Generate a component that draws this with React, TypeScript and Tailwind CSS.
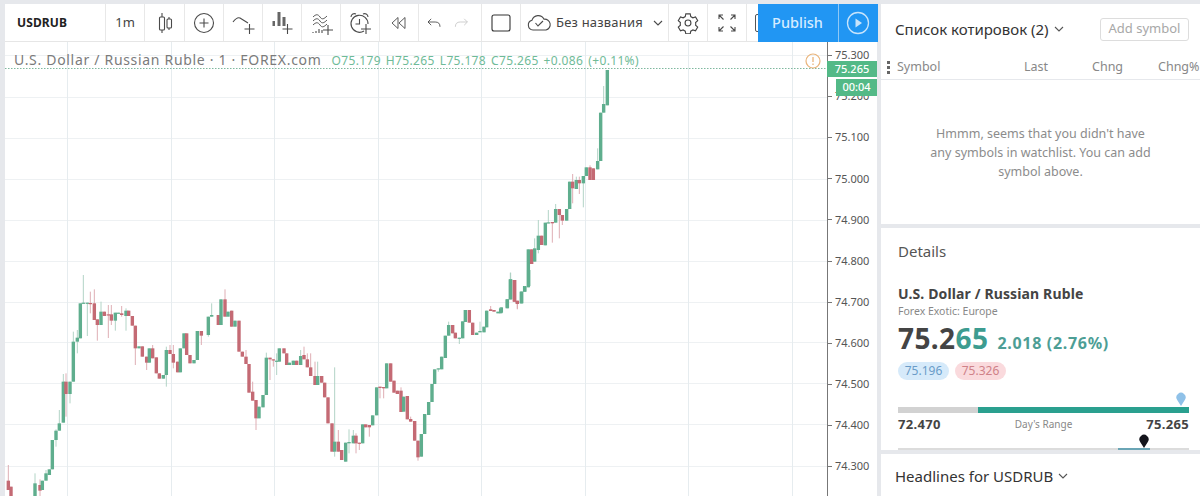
import React from "react";

type C = [number, number, number, "g" | "r", number?, number?];
// x, top, bottom, colour, wick top, wick bottom, measured in 3x picture units
const left: C[] = [
  [25,632,660,"r",585,660],[33,650,690,"r"],
  [105,640,690,"g",610],[120,645,662,"r",628,678],[127,632,660,"g"],[138,610,632,"g",600],[148,598,615,"g"],[157,510,598,"g"],[168,482,510,"g",478,530],[178,460,482,"g",420],
  [190,335,458,"g",312],[198,335,372,"r",310,440],[210,335,372,"g",335,400],[220,215,335,"g",185],[232,203,215,"g",180,250],[241,100,205,"g"],[250,98,101,"g",15,101],[262,98,101,"g",98,198],[271,99,101,"r",65,130],
  [283,100,150,"r",58,150],[292,148,165,"r",148,212],[303,125,165,"g",95,165],[313,125,138,"r"],[325,133,136,"r",105,204],[334,133,152,"r",105,165],[346,128,152,"g",128,182],[355,128,130,"g"],[365,130,135,"r",108,140],[378,122,138,"g",115,182],[386,122,138,"r"],
  [397,138,167,"r"],[406,167,235,"r",167,285],[417,229,235,"g"],[427,229,260,"r"],[440,260,278,"r",260,300],[448,235,278,"g"],[458,235,265,"r",225],[469,262,310,"r"],[478,310,326,"r"],[490,315,326,"g"],
  [499,240,315,"g",230,350],[510,240,252,"r",225],[520,252,278,"r",225,295],[533,275,307,"r"],[541,235,307,"g"],[552,190,235,"g"],[560,190,255,"r"],[570,255,280,"r"],[582,270,280,"g"],[592,183,270,"g"],[604,183,197,"r",183,225],
  [625,140,195,"g",140,200],[635,135,140,"g",100],[655,135,165,"r"],[663,88,165,"g"],[675,88,140,"r",58],[684,125,140,"g"],[695,122,170,"r"],[705,152,170,"g"],[717,152,245,"r"],[727,245,260,"r"],[738,260,282,"r",240],[747,282,368,"r"],
  [758,365,392,"r",335],[768,390,445,"r",390,480],[777,410,445,"g"],[789,375,412,"g"],[799,263,375,"g",248],[810,263,268,"r",263,330],[820,268,270,"r",268,290],[830,272,275,"g",250,315],[838,235,275,"g"],[852,235,250,"r"],[860,250,285,"r"],[868,278,285,"g"],[880,272,285,"g"],[890,272,285,"r"],
];
const mid: C[] = [
  [2,258,285,"g",240],[12,255,268,"r",230],[22,268,292,"r",250],[32,292,318,"r",250],[45,318,345,"r",275],[53,318,345,"g",275],[65,318,338,"r"],[74,338,382,"r"],[84,382,460,"r"],[96,460,545,"r"],[104,515,545,"g",292,560],[115,515,545,"r",480],[125,540,570,"r"],[137,518,575,"g"],[147,516,520,"g",478,550],[160,497,520,"g",480],[168,497,520,"r",490,550],[178,518,520,"r",518,540],
  [188,463,520,"g"],[197,463,472,"r"],[208,465,472,"r",465,500],[218,436,466,"g"],[230,352,436,"g",352],[240,350,354,"r",350,385],[251,351,355,"r",351,385],[260,280,355,"g"],[272,280,335,"r"],[282,332,368,"r"],[292,362,372,"r"],[303,362,426,"r",352],[311,380,425,"g"],[322,378,448,"r"],[332,447,455,"r",440],[344,453,512,"r"],[354,512,562,"r",512,572],[364,492,560,"g"],[374,432,492,"g"],[386,396,435,"g"],[396,342,396,"g"],[404,298,342,"g"],[415,295,298,"g",295,305],[425,260,298,"g"],[436,197,264,"g"],[446,165,197,"g",155],[458,165,190,"r"],[466,188,205,"r"],[478,203,205,"g",203,222],[488,154,205,"g"],[496,120,156,"g"],[508,120,158,"r"],[518,158,195,"r"],[530,188,195,"g"],[540,183,187,"g",155],[552,170,187,"g"],[560,122,172,"g"],[572,118,123,"r",108],[582,120,125,"r"],[594,125,130,"g"],[604,112,128,"g"],[622,88,113,"g"],[632,28,88,"g",8],[644,30,95,"r"],[652,92,100,"r",92,116],[664,65,100,"g"],[674,48,65,"g"],[686,0,48,"g"],
];
const right: C[] = [
  [2,745,760,"g"],[22,718,745,"g"],[31,658,718,"g",638],[43,660,725,"r"],[52,723,732,"r",723,748],[65,695,730,"g"],[74,680,695,"g"],[85,568,682,"g"],[95,568,612,"r"],[104,565,605,"g",535],[115,527,570,"g",480,580],[125,527,555,"r"],[136,488,556,"g",488],[145,487,490,"g",450],[157,486,490,"r",486,548],[167,447,488,"g",432],[178,447,465,"r",447,535],[187,465,482,"r",465,495],[200,447,482,"g"],[209,365,447,"g"],[218,365,385,"r",342,430],[229,360,387,"g",350],[238,360,370,"r",350,402],[250,348,370,"g",348,442],[259,322,348,"g"],[270,322,360,"r",316],[280,325,360,"r"],[293,303,328,"g",265],[302,158,303,"g"],[311,132,158,"g",78],[322,30,136,"g"],
];
type B = { x: number; y1: number; y2: number; c: "g" | "r"; w1: number; w2: number };
const toPx = (list: C[], ox: number, oy: number): B[] =>
  list.map(([x, t, b, c, w1, w2]) => ({
    x: ox + x / 3,
    y1: oy + t / 3,
    y2: oy + b / 3,
    c,
    w1: oy + (w1 ?? t) / 3,
    w2: oy + (w2 ?? b) / 3,
  }));
const candles = [...toPx(left, 0, 270), ...toPx(mid, 300, 270), ...toPx(right, 500, 60)];

const hLines = [55, 97, 138, 179, 220, 261, 302, 342, 383, 424, 466];
const vLines = [67, 171, 274, 378, 481, 585, 688, 792];
const prices = ["75.300", "75.200", "75.100", "75.000", "74.900", "74.800", "74.700", "74.600", "74.500", "74.400", "74.300"];

const s = { fill: "none", stroke: "#4a4a4a", strokeWidth: 1.1 } as const;
const Ico = ({ children, w = 26 }: { children: React.ReactNode; w?: number }) => (
  <svg width={w} height={26} viewBox={`0 0 ${w} 26`} {...s}>{children}</svg>
);

const Cell = ({ w, children }: { w: string; children: React.ReactNode }) => (
  <div className={`${w} h-full shrink-0 flex items-center justify-center border-r border-[#e8e8e8]`}>{children}</div>
);

const Pin = ({ color }: { color: string }) => (
  <svg width="10" height="14" viewBox="0 0 10 14"><path d="M5 14 L1.2 8 A4.6 4.6 0 1 1 8.8 8 Z" fill={color} /></svg>
);

export default function App() {
  return (
    <div className="w-[1200px] h-[496px] overflow-hidden bg-[#e6e8ec] flex pt-1 pl-[5px] gap-1 font-['Noto_Sans',sans-serif]">
      <div className="w-[872px] h-full bg-white flex flex-col">
        <div className="h-[38px] shrink-0 flex items-center border-b border-[#e6e6e6] relative">
          <div className="w-[101px] h-full shrink-0 flex items-center pl-[12px] border-r border-[#e8e8e8]">
            <span className="text-[12px] font-bold text-[#222] tracking-[.1px]">USDRUB</span>
          </div>
          <Cell w="w-[39px]"><span className="text-[13px] text-[#444]">1m</span></Cell>
          <Cell w="w-[40px]"><Ico>
            <path d="M10 3v20M17 7v13" /><rect x="7.500" y="7" width="5" height="13" rx="1" fill="#fff" /><rect x="15" y="9" width="4.500" height="9" rx="1" fill="#fff" />
          </Ico></Cell>
          <Cell w="w-[39px]"><Ico><circle cx="13" cy="13" r="9.500" /><path d="M13 8.500v9M8.500 13h9" /></Ico></Cell>
          <Cell w="w-[39px]"><Ico><path d="M3 12C6 8 8 7 10 8l8 5" /><path d="M19.500 14v10M14.500 19h10" /></Ico></Cell>
          <Cell w="w-[39px]"><Ico>
            <rect x="3.500" y="11" width="2.500" height="5" fill="#666" stroke="none" /><rect x="8.500" y="2" width="3" height="14" fill="#666" stroke="none" /><rect x="13.500" y="7" width="3" height="9" fill="#666" stroke="none" /><path d="M18.500 14v10M13.500 19h10" />
          </Ico></Cell>
          <Cell w="w-[39px]"><Ico>
            <path d="M5 7c3-3 5-3 7 0s4 2 7-1M5 11c3-3 5-3 7 0s4 2 7-1M5 15c3-3 5-3 7 0s4 2 7-1" strokeWidth="0.900" />
            <path d="M5 22v1M8 21v2M11 19v4M14 20v3" /><path d="M20 15v10M15 20h10" />
          </Ico></Cell>
          <Cell w="w-[39px]"><Ico>
            <path d="M17 21a8.500 8.500 0 1 1 4-7" /><path d="M12.500 9v5h-4" /><path d="M4 7c0-3 3-4 5-3M21 7c0-3-3-4-5-3" /><path d="M19 14v10M14 19h10" />
          </Ico></Cell>
          <Cell w="w-[39px]"><Ico><path d="M12 7.500l-6 5.500 6 5.500zM19 7.500l-6 5.500 6 5.500z" strokeWidth="0.900" /></Ico></Cell>
          <Cell w="w-[63px]">
            <div className="flex items-center gap-[2px] pr-1">
              <Ico><path d="M7 8L3 12l4 4M3 12h9c4 0 6 2 6 6" transform="translate(3 0) scale(.8) translate(2 3)" /></Ico>
              <Ico><path d="M17 8l4 4-4 4M21 12h-9c-4 0-6 2-6 6" stroke="#c8c8c8" transform="scale(.8) translate(2 3)" /></Ico>
            </div>
          </Cell>
          <Cell w="w-[39px]"><svg width="20" height="20" viewBox="0 0 20 20"><rect x="1" y="2" width="18" height="16" rx="2" fill="none" stroke="#333" strokeWidth="1.100" /></svg></Cell>
          <Cell w="w-[148px]">
            <div className="flex items-center text-[#444]">
              <svg width="26" height="20" viewBox="0 0 26 20" {...s}><path d="M7 17a5 5 0 0 1-1-9.800 6.500 6.500 0 0 1 12-1 5.500 5.500 0 0 1 2 10.800z" /><path d="M9.500 10l2.500 3 5-5" /></svg>
              <span className="text-[13px] ml-[4px] tracking-[.2px]">Без названия</span>
              <svg width="10" height="6" viewBox="0 0 10 6" className="ml-[10px]" {...s}><path d="M1 1l4 4 4-4" /></svg>
            </div>
          </Cell>
          <Cell w="w-[39px]"><svg width="22" height="22" viewBox="0 0 24 24" fill="none" stroke="#444" strokeWidth="1.200"><circle cx="12" cy="12" r="3.200" /><path d="M9.600 2h4.800l.6 3 2.300 1.300 2.900-1 2.400 4.200-2.300 2a8 8 0 0 1 0 2.900l2.300 2-2.400 4.200-2.900-1-2.300 1.300-.6 3H9.600l-.6-3-2.300-1.300-2.900 1-2.400-4.200 2.300-2a8 8 0 0 1 0-2.900l-2.300-2 2.400-4.200 2.900 1L9 5z" /></svg></Cell>
          <Cell w="w-[39px]"><svg width="18" height="18" viewBox="0 0 18 18" {...s}><path d="M5 1H1v4M1 1l4.500 4.500M13 1h4v4M17 1l-4.500 4.500M5 17H1v-4M1 17l4.500-4.500M13 17h4v-4M17 17l-4.500-4.500" /></svg></Cell>
          <div className="absolute left-[750px] top-[10px] w-[8px] h-[18px] border border-[#555] rounded-[2px]" />
          <div className="absolute left-[752.500px] top-0 h-[38px] w-[120px] bg-[#2196f3] flex text-[#d6ecff]">
            <div className="w-[81px] flex items-center justify-center border-r border-[#8fc8f5] text-[14.500px] font-medium">Publish</div>
            <div className="flex-1 flex items-center justify-center">
              <svg width="24" height="24" viewBox="0 0 24 24"><circle cx="12" cy="12" r="10.500" fill="none" stroke="#c8e4fb" strokeWidth="1.300" /><path d="M9.500 7.500l6.500 4.500-6.500 4.500z" fill="#c8e4fb" /></svg>
            </div>
          </div>
        </div>
        <div className="flex-1 flex relative overflow-hidden">
          <div className="w-[822px] h-full shrink-0 relative">
            <svg width="822" height="454" viewBox="5 42 822 454" className="block">
              {hLines.map((y) => <line key={y} x1="5" x2="827" y1={y + 0.5} y2={y + 0.5} stroke="#eef1f3" />)}
              {vLines.map((x) => <line key={x} y1="42" y2="496" x1={x + 0.5} x2={x + 0.5} stroke="#e6ecef" />)}
              <line x1="5" x2="827" y1="68.500" y2="68.500" stroke="#7fb89f" strokeDasharray="1.500 1.500" />
              {candles.map((k, i) => {
                const col = k.c === "g" ? "#5fae8e" : "#c46a74";
                const wick = k.c === "g" ? "#a9cfc0" : "#dba5ab";
                return (
                  <g key={i}>
                    <line x1={k.x} x2={k.x} y1={k.w1} y2={k.w2} stroke={wick} strokeWidth="0.900" />
                    <rect x={k.x - 1.700} y={k.y1} width="3.400" height={Math.max(k.y2 - k.y1, 1.200)} fill={col} />
                  </g>
                );
              })}
            </svg>
            <div className="absolute left-[9px] top-[7px] flex items-baseline whitespace-nowrap">
              <span className="text-[14px] text-[#7b7b7b] tracking-[.69px]">U.S. Dollar / Russian Ruble · 1 · FOREX.com</span>
              <span className="text-[12px] text-[#6fbb98] ml-[10px] tracking-[.35px]">
                <span className="mr-[5px]">O75.179</span><span className="mr-[5px]">H75.265</span><span className="mr-[5px]">L75.178</span><span className="mr-[5px]">C75.265</span><span className="mr-[5px]">+0.086</span>(+0.11%)
              </span>
            </div>
            <svg width="16" height="16" viewBox="0 0 16 16" className="absolute left-[800px] top-[11px]">
              <circle cx="8" cy="8" r="7" fill="none" stroke="#eab47a" strokeWidth="1.200" />
              <path d="M8 4v5M8 10.500v1.500" stroke="#eab47a" strokeWidth="1.300" />
            </svg>
          </div>
          <div className="flex-1 border-l border-[#777] flex flex-col relative bg-white">
            {prices.map((p) => (
              <div key={p} className="h-[41.100px] shrink-0 flex items-center gap-[3px] first:-mt-[7px]">
                <div className="w-1 h-px bg-[#777]" />
                <span className="text-[11px] text-[#555]">{p}</span>
              </div>
            ))}
            <div className="absolute -left-px top-[19px] w-[50px] h-4 bg-[#53b987] text-white text-[11px] font-medium flex items-center justify-center">75.265</div>
            <div className="absolute right-0 top-[37px] w-[41px] h-[17px] bg-[#53b987] text-white text-[11px] font-medium flex items-center justify-center">00:04</div>
          </div>
        </div>
      </div>

      <div className="flex-1 flex flex-col gap-1 min-w-0">
        <div className="h-[220px] shrink-0 bg-white flex flex-col">
          <div className="h-[50px] shrink-0 flex items-center pl-[14px] pr-[11px]">
            <span className="text-[15px] text-[#333]">Список котировок (2)</span>
            <svg width="10" height="6" viewBox="0 0 10 6" className="ml-[5px]" fill="none" stroke="#555" strokeWidth="1.100"><path d="M1 1l4 4 4-4" /></svg>
            <div className="ml-auto w-[89px] h-[23px] border border-[#dddddd] rounded-[3px] flex items-center justify-center text-[13px] text-[#a8a8a8]">Add symbol</div>
          </div>
          <div className="h-[26px] shrink-0 border-b border-[#e6e8ec] flex items-center text-[12.500px] text-[#888] relative pl-[16px] pt-[2px]">
            <span className="absolute left-[6px] top-[7px] flex flex-col gap-[2px]">
              <i className="block w-[3px] h-[3px] bg-[#666]" /><i className="block w-[3px] h-[3px] bg-[#666]" /><i className="block w-[3px] h-[3px] bg-[#666]" />
            </span>
            <span className="w-[127px]">Symbol</span>
            <span className="w-[68px]">Last</span>
            <span className="w-[66px]">Chng</span>
            <span>Chng%</span>
          </div>
          <div className="flex-1 flex items-center justify-center text-center text-[12.500px] leading-[19px] text-[#8c8c8c]">
            <p className="w-[225px]">Hmmm, seems that you didn't have any symbols in watchlist. You can add symbol above.</p>
          </div>
        </div>

        <div className="h-[222px] shrink-0 bg-white pl-[17px] pr-[11px] flex flex-col">
          <div className="text-[15px] text-[#555] mt-[13px] leading-5">Details</div>
          <div className="text-[14px] font-bold text-[#444] mt-[23px] leading-5 tracking-[.13px]">U.S. Dollar / Russian Ruble</div>
          <div className="text-[10.500px] text-[#888] leading-[14px]">Forex Exotic: Europe</div>
          <div className="flex items-baseline leading-[30px] mt-[5px]">
            <span className="text-[28px] font-bold text-[#444] tracking-[.4px]">75.2<span className="text-[#3d9c90]">65</span></span>
            <span className="text-[16px] font-bold text-[#4d9e95] ml-[9px] tracking-[.7px]">2.018 (2.76%)</span>
          </div>
          <div className="flex gap-[6px] mt-[4px]">
            <span className="w-[51px] h-[18px] rounded-full bg-[#d6eafa] text-[#6a9cc8] text-[12px] flex items-center justify-center">75.196</span>
            <span className="w-[51px] h-[18px] rounded-full bg-[#fadadd] text-[#cf8188] text-[12px] flex items-center justify-center">75.326</span>
          </div>
          <div className="flex justify-end pr-[3px] mt-[12px] h-[14px]"><Pin color="#8fc1e8" /></div>
          <div className="flex h-[7px] mt-[1px]">
            <div className="w-[80px] bg-[#d2d2d2]" />
            <div className="flex-1 bg-[#2aa08f]" />
          </div>
          <div className="flex items-center justify-between h-5 mt-[2px] font-bold text-[13px] text-[#444] tracking-[.3px]">
            <span>72.470</span>
            <span className="text-[10px] font-normal text-[#888] tracking-normal">Day's Range</span>
            <span>75.265</span>
          </div>
          <div className="flex justify-end pr-[40px] h-[14px]"><Pin color="#14151c" /></div>
          <div className="h-[2px] bg-[#dcdcdc] flex justify-end pr-[39px]"><div className="w-[32px] bg-[#6aa5b5]" /></div>
        </div>

        <div className="flex-1 bg-white pl-[14px] pt-3">
          <div className="flex items-center">
            <span className="text-[15px] text-[#333] leading-5">Headlines for USDRUB</span>
            <svg width="10" height="6" viewBox="0 0 10 6" className="ml-[5px]" fill="none" stroke="#555" strokeWidth="1.100"><path d="M1 1l4 4 4-4" /></svg>
          </div>
        </div>
      </div>
    </div>
  );
}
